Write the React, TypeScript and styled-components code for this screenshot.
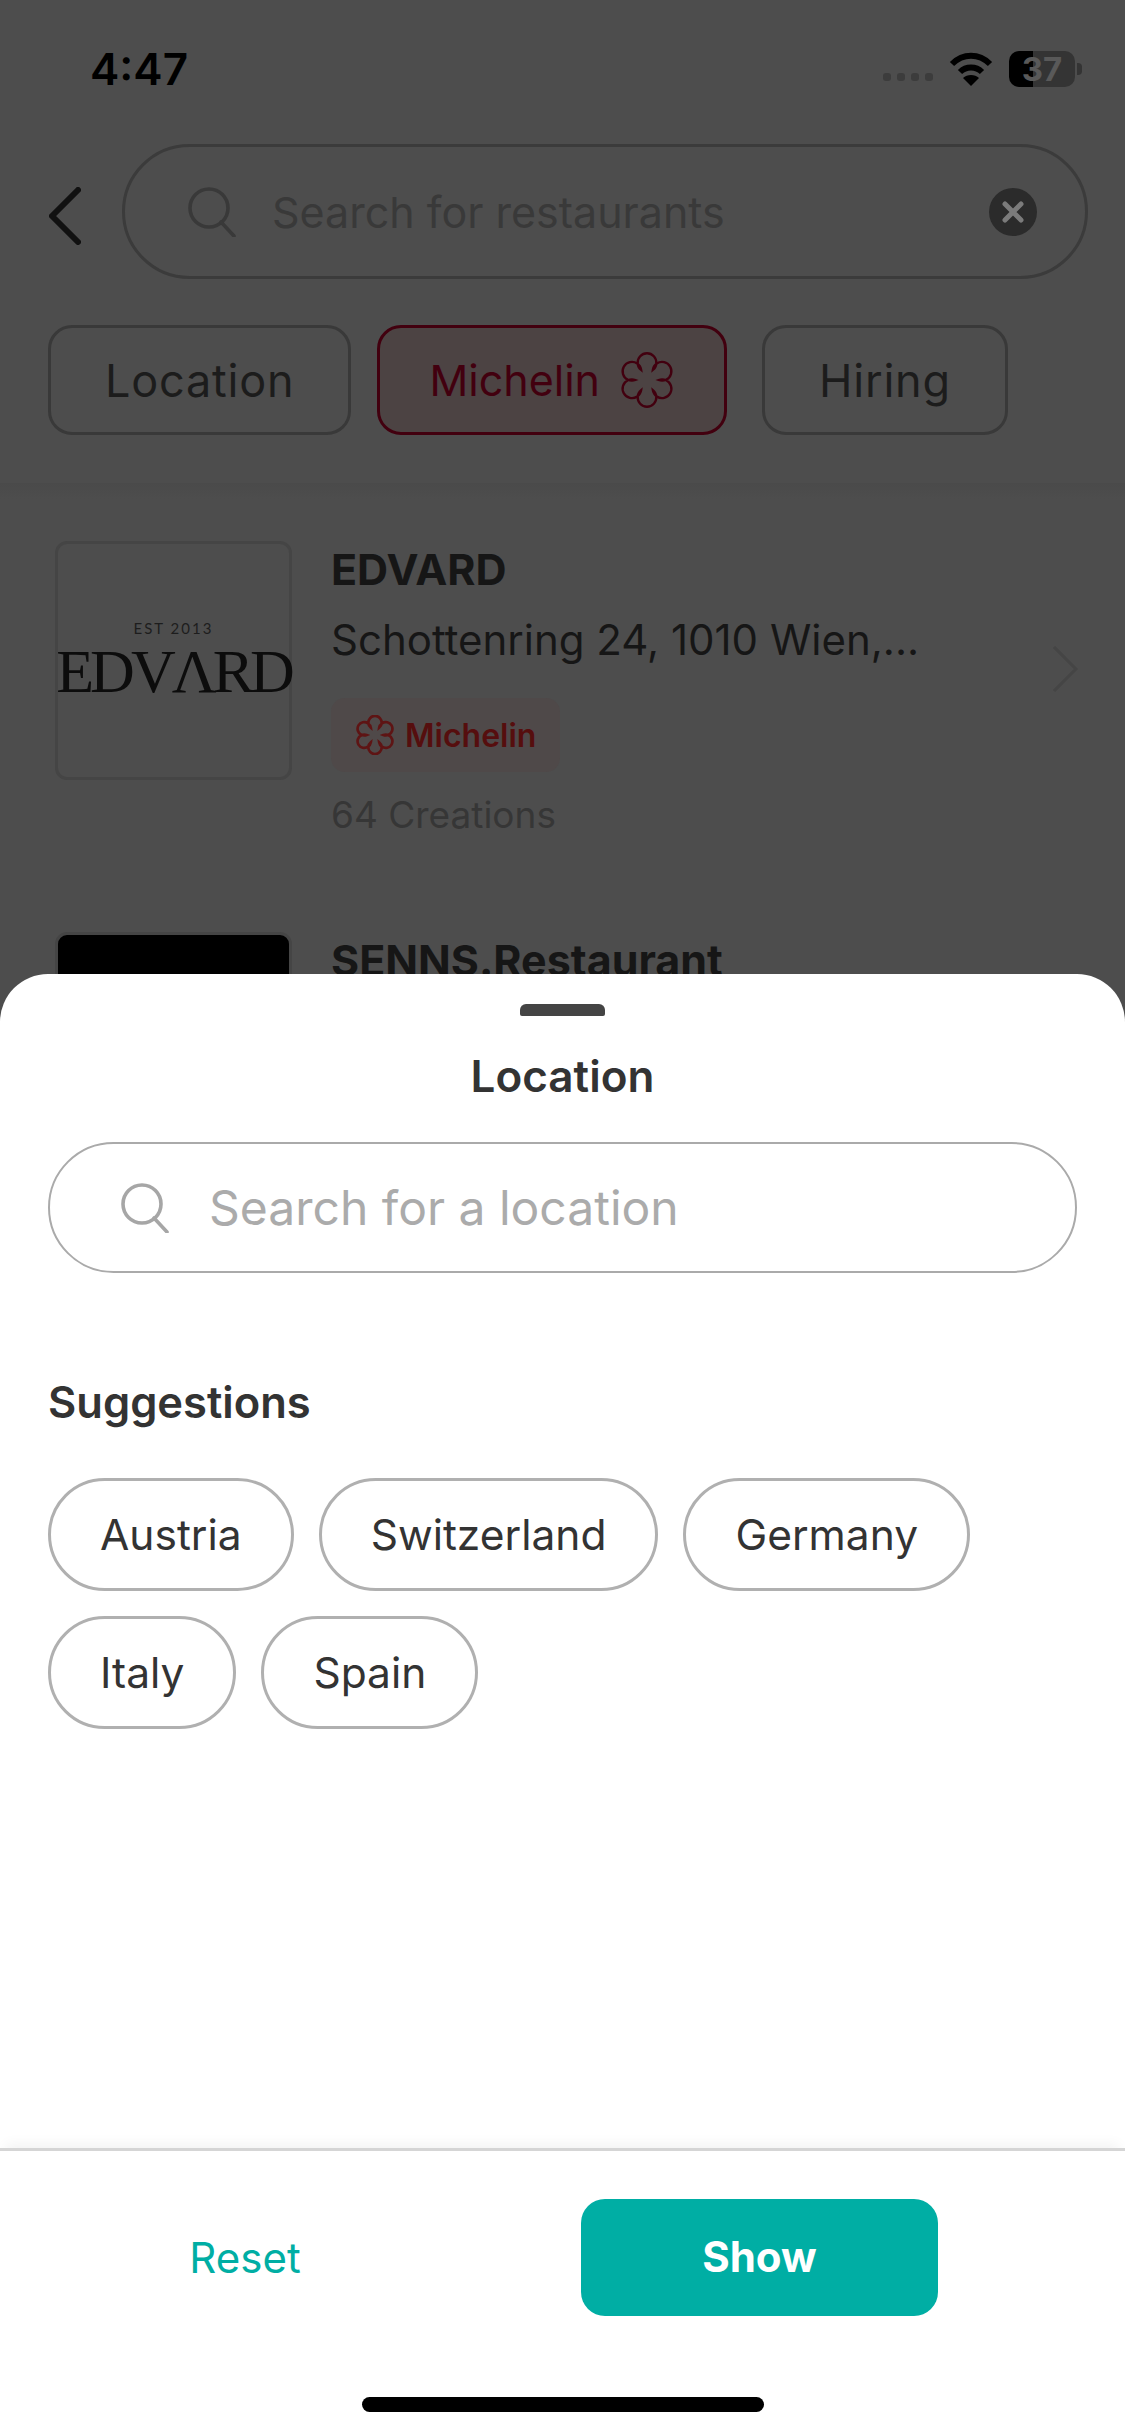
import styled, { createGlobalStyle } from "styled-components";

const GlobalStyle = createGlobalStyle`
  html, body {
    margin: 0;
    padding: 0;
    background: #4d4d4d;
  }
  * {
    box-sizing: border-box;
  }
`;

const Screen = styled.div`
  width: 1125px;
  height: 2436px;
  display: flex;
  flex-direction: column;
  overflow: hidden;
  background: #4d4d4d;
  font-family: Inter, "Liberation Sans", sans-serif;
`;

const Backdrop = styled.div`
  height: 974px;
  flex: none;
  overflow: hidden;
`;

const StatusBar = styled.div`
  height: 138px;
  display: flex;
  align-items: center;
  justify-content: space-between;
  padding: 0 43px 0 90px;
`;

const Time = styled.span`
  font-size: 44px;
  font-weight: 600;
  color: #000;
`;

const StatusIcons = styled.div`
  display: flex;
  align-items: center;
`;

const SignalDots = styled.div`
  display: flex;
  gap: 6px;
  margin: 16px 16px 0 0;
`;

const SignalDot = styled.span`
  width: 8px;
  height: 8px;
  border-radius: 3px;
  background: #3c3c3c;
`;

const Battery = styled.div`
  width: 66px;
  height: 36px;
  margin-left: 16px;
  border-radius: 10px;
  background: linear-gradient(to right, #000 24px, #343434 24px);
  color: #595959;
  font-size: 33px;
  font-weight: 700;
  line-height: 36px;
  text-align: center;
`;

const BatteryCap = styled.span`
  width: 5px;
  height: 12px;
  margin-left: 2px;
  border-radius: 0 4px 4px 0;
  background: #343434;
`;

const Header = styled.div`
  display: flex;
  align-items: center;
  gap: 41px;
  margin-top: 6px;
  padding-left: 49px;
`;

const BackIcon = styled.svg`
  flex: none;
  margin-top: 9px;
`;

const SearchPill = styled.div`
  width: 966px;
  height: 135px;
  display: flex;
  align-items: center;
  padding: 0 48px 0 63px;
  border: 3px solid #3b3b3b;
  border-radius: 68px;
`;

const Placeholder = styled.span<{ $dim?: boolean }>`
  flex: 1;
  margin-left: ${(p) => (p.$dim ? "34px" : "38px")};
  font-size: ${(p) => (p.$dim ? "43px" : "48px")};
  color: ${(p) => (p.$dim ? "#393939" : "#ababab")};
`;

const FilterRow = styled.div`
  display: flex;
  gap: 26px;
  margin-top: 46px;
  padding-left: 48px;
`;

const FilterChip = styled.div<{ $active?: boolean; $shift?: boolean }>`
  height: 110px;
  display: flex;
  align-items: center;
  gap: 19px;
  padding: 0 ${(p) => (p.$active ? "49px" : "54px")};
  margin-left: ${(p) => (p.$shift ? "9px" : "0")};
  border: 3px solid ${(p) => (p.$active ? "#42000f" : "#393939")};
  border-radius: 24px;
  background: ${(p) => (p.$active ? "#4c4343" : "transparent")};
  color: ${(p) => (p.$active ? "#42000f" : "#1c1c1c")};
  font-size: ${(p) => (p.$active ? "43px" : "45px")};
  letter-spacing: ${(p) => (p.$active ? "0" : "0.8px")};
`;

const RestaurantList = styled.div`
  display: flex;
  flex-direction: column;
  gap: 97px;
  margin-top: 48px;
  padding: 58px 0 0 55px;
  background: linear-gradient(to bottom, #4a4a4a, #4d4d4d 16px);
`;

const RestaurantRow = styled.div`
  display: flex;
  gap: 39px;
`;

const Logo = styled.div<{ $black?: boolean }>`
  width: 237px;
  height: 239px;
  flex: none;
  display: flex;
  flex-direction: column;
  align-items: center;
  justify-content: center;
  border: 3px solid #454545;
  border-radius: 12px;
  background: ${(p) => (p.$black ? "#000" : "transparent")};
`;

const LogoYear = styled.span`
  font-family: "Lato", sans-serif;
  font-size: 15px;
  letter-spacing: 2px;
  color: #1d1d1d;
`;

const LogoName = styled.span`
  margin-top: 2px;
  font-family: "Liberation Serif", serif;
  font-size: 62px;
  line-height: 64px;
  letter-spacing: -4px;
  white-space: nowrap;
  color: #0c0c0c;
`;

const RestaurantInfo = styled.div`
  width: 680px;
  display: flex;
  flex-direction: column;
  align-items: flex-start;
  padding-top: 4px;
`;

const RestaurantName = styled.span`
  font-size: 43px;
  font-weight: 700;
  line-height: 48px;
  color: #161616;
`;

const Address = styled.span`
  margin-top: 22px;
  font-size: 42px;
  line-height: 50px;
  color: #161616;
`;

const Badge = styled.div`
  height: 74px;
  display: flex;
  align-items: center;
  gap: 10px;
  margin-top: 33px;
  padding: 0 24px;
  border-radius: 14px;
  background: #4f4949;
  color: #560e0e;
  font-size: 32px;
  font-weight: 600;
`;

const Creations = styled.span`
  margin-top: 23px;
  font-size: 37px;
  line-height: 40px;
  color: #363636;
`;

const RowChevron = styled.svg`
  flex: none;
  align-self: flex-start;
  margin: 104px 0 0 2px;
`;

const Sheet = styled.div`
  flex: 1;
  display: flex;
  flex-direction: column;
  border-radius: 48px 48px 0 0;
  background: #fff;
  color: #333;
`;

const SheetBody = styled.div`
  flex: 1;
  display: flex;
  flex-direction: column;
  padding: 0 48px;
`;

const Handle = styled.div`
  width: 85px;
  height: 12px;
  margin: 30px auto 0;
  border-radius: 6px 6px 2px 2px;
  background: #444;
`;

const SheetTitle = styled.h2`
  margin: 35px 0 0;
  font-size: 44px;
  font-weight: 600;
  line-height: 50px;
  text-align: center;
`;

const LocationSearch = styled.div`
  width: 1029px;
  height: 131px;
  display: flex;
  align-items: center;
  margin-top: 41px;
  padding-left: 71px;
  border: 2px solid #aaa;
  border-radius: 66px;
`;

const SectionTitle = styled.h3`
  margin: 104px 0 0;
  font-size: 43.5px;
  font-weight: 600;
  line-height: 50px;
`;

const Suggestions = styled.div`
  width: 960px;
  display: flex;
  flex-wrap: wrap;
  gap: 25px;
  margin-top: 51px;
`;

const SuggestionChip = styled.div`
  height: 113px;
  display: flex;
  align-items: center;
  padding: 0 49px;
  border: 3px solid #b0b0b0;
  border-radius: 57px;
  font-size: 42.5px;
`;

const Footer = styled.div`
  height: 288px;
  flex: none;
  display: flex;
  flex-direction: column;
  border-top: 3px solid #d5d5d5;
  box-shadow: 0 -10px 12px -6px rgba(0, 0, 0, 0.05);
`;

const FooterActions = styled.div`
  display: flex;
  align-items: center;
  margin-top: 48px;
`;

const ResetButton = styled.div`
  width: 490px;
  text-align: center;
  font-size: 42px;
  color: #00aea4;
`;

const ShowButton = styled.div`
  width: 357px;
  height: 117px;
  margin-left: 91px;
  border-radius: 24px;
  background: #00aea4;
  color: #fff;
  font-size: 42px;
  font-weight: 700;
  line-height: 115px;
  text-align: center;
`;

const HomeIndicator = styled.div`
  width: 402px;
  height: 15px;
  margin: 81px auto 0;
  border-radius: 8px;
  background: #000;
`;

const SearchIcon = ({ color }: { color: string }) => (
  <svg width="50" height="50" viewBox="0 0 50 50" fill="none" stroke={color} strokeWidth="3.6">
    <circle cx="21" cy="21" r="19" />
    <path d="M33 35 L46 49" strokeLinecap="round" />
  </svg>
);

const Rosette = ({ size, color, width }: { size: number; color: string; width: number }) => (
  <svg width={size} height={size} viewBox="0 0 24 24" fill="none" stroke={color} strokeWidth={width}>
    <path d="M17 12A4 4 0 1 1 14.5 16.33A4 4 0 1 1 9.5 16.33A4 4 0 1 1 7 12A4 4 0 1 1 9.5 7.67A4 4 0 1 1 14.5 7.67A4 4 0 1 1 17 12Z" />
  </svg>
);

const suggestions = ["Austria", "Switzerland", "Germany", "Italy", "Spain"];

export default function App() {
  return (
    <Screen>
      <GlobalStyle />
      <Backdrop>
        <StatusBar>
          <Time>4:47</Time>
          <StatusIcons>
            <SignalDots>
              <SignalDot />
              <SignalDot />
              <SignalDot />
              <SignalDot />
            </SignalDots>
            <svg width="44" height="34" viewBox="0 0 44 34" fill="none" stroke="#000" strokeWidth="6">
              <path d="M3 12 C14 1 30 1 41 12" />
              <path d="M11 20 C17 14 27 14 33 20" />
              <path d="M14 26 C18 22 26 22 30 26 L22 34 Z" fill="#000" stroke="none" />
            </svg>
            <Battery>37</Battery>
            <BatteryCap />
          </StatusIcons>
        </StatusBar>
        <Header>
          <BackIcon width="32" height="58" viewBox="0 0 32 58" fill="none" stroke="#111" strokeWidth="6" strokeLinecap="round">
            <path d="M29 3 L3 29 L29 55" strokeLinejoin="round" />
          </BackIcon>
          <SearchPill>
            <SearchIcon color="#393939" />
            <Placeholder $dim>Search for restaurants</Placeholder>
            <svg width="48" height="48" viewBox="0 0 48 48">
              <circle cx="24" cy="24" r="24" fill="#2b2b2b" />
              <path d="M16 16 L32 32 M32 16 L16 32" stroke="#7b7b7b" strokeWidth="5" strokeLinecap="round" />
            </svg>
          </SearchPill>
        </Header>
        <FilterRow>
          <FilterChip>Location</FilterChip>
          <FilterChip $active>
            Michelin
            <Rosette size={56} color="#42000f" width={1} />
          </FilterChip>
          <FilterChip $shift>Hiring</FilterChip>
        </FilterRow>
        <RestaurantList>
          <RestaurantRow>
            <Logo>
              <LogoYear>EST 2013</LogoYear>
              <LogoName>EDVΛRD</LogoName>
            </Logo>
            <RestaurantInfo>
              <RestaurantName>EDVARD</RestaurantName>
              <Address>Schottenring 24, 1010 Wien,...</Address>
              <Badge>
                <Rosette size={40} color="#5e1414" width={1.6} />
                Michelin
              </Badge>
              <Creations>64 Creations</Creations>
            </RestaurantInfo>
            <RowChevron width="26" height="48" viewBox="0 0 26 48" fill="none" stroke="#454545" strokeWidth="3">
              <path d="M2 2 L24 24 L2 46" />
            </RowChevron>
          </RestaurantRow>
          <RestaurantRow>
            <Logo $black />
            <RestaurantInfo>
              <RestaurantName>SENNS.Restaurant</RestaurantName>
            </RestaurantInfo>
          </RestaurantRow>
        </RestaurantList>
      </Backdrop>
      <Sheet>
        <Handle />
        <SheetBody>
          <SheetTitle>Location</SheetTitle>
          <LocationSearch>
            <SearchIcon color="#a6a6a6" />
            <Placeholder>Search for a location</Placeholder>
          </LocationSearch>
          <SectionTitle>Suggestions</SectionTitle>
          <Suggestions>
            {suggestions.map((name) => (
              <SuggestionChip key={name}>{name}</SuggestionChip>
            ))}
          </Suggestions>
        </SheetBody>
        <Footer>
          <FooterActions>
            <ResetButton>Reset</ResetButton>
            <ShowButton>Show</ShowButton>
          </FooterActions>
          <HomeIndicator />
        </Footer>
      </Sheet>
    </Screen>
  );
}
